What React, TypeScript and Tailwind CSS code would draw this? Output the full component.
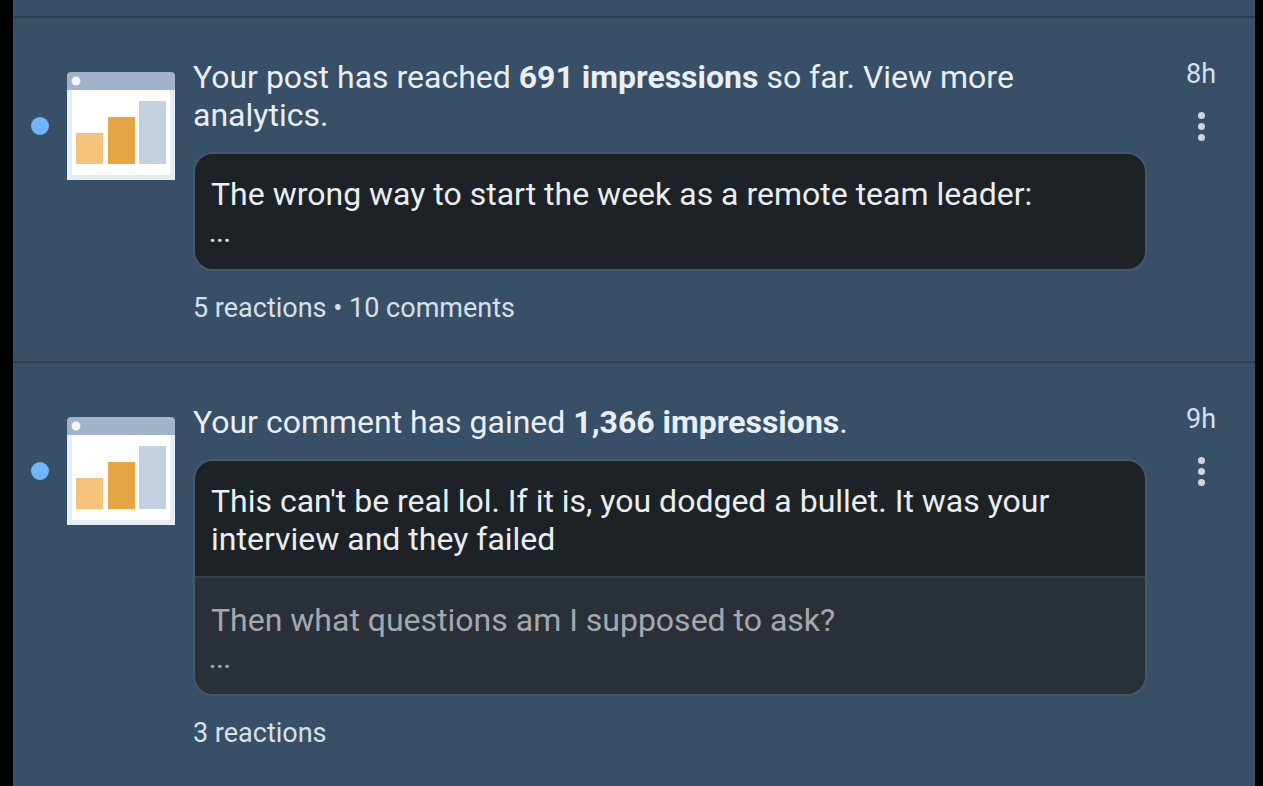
import React from "react";

function AnalyticsIcon() {
  return (
    <svg width="108" height="108" viewBox="0 0 108 108" className="block shrink-0">
      <path d="M0 18V4a4 4 0 0 1 4-4h100a4 4 0 0 1 4 4v14z" fill="#a0b3ca" />
      <rect x="0" y="18" width="108" height="90" fill="#e6edf4" />
      <rect x="5" y="18" width="98" height="85" fill="#ffffff" />
      <circle cx="9" cy="9" r="4.5" fill="#f3f6fa" />
      <rect x="9" y="61" width="27" height="31" fill="#f5c27c" />
      <rect x="41" y="45" width="27" height="47" fill="#e6a443" />
      <rect x="72" y="29" width="27" height="63" fill="#c3d1e0" />
    </svg>
  );
}

function Notification({
  time,
  children,
  stats,
  box,
}: {
  time: string;
  children: React.ReactNode;
  stats: string;
  box: React.ReactNode;
}) {
  return (
    <div className="flex pt-[40px] pl-[18px] border-b-2 border-[#2f3d4c] last:border-b-0">
      <div className="flex h-[108px] mt-[14px] items-center">
        <span className="w-[18px] h-[18px] rounded-full bg-[#70b5f9]" />
      </div>
      <div className="ml-[18px] mt-[14px] shrink-0">
        <AnalyticsIcon />
      </div>
      <div className="ml-[18px] w-[954px] shrink-0">
        <p className="text-[32px] leading-[38px] text-[#e9eef3]">{children}</p>
        <div className="mt-[18px] rounded-[20px] overflow-hidden border-2 border-[#46576a]">{box}</div>
        <p className="mt-[18px] mb-[34px] text-[27px] leading-[38px] text-[#d5e0ea]">{stats}</p>
      </div>
      <div className="flex-1 flex flex-col items-center pr-[6px]">
        <span className="text-[27px] leading-[30px] mt-[1px] text-[#d5e0ea] ml-[6px]">{time}</span>
        <div className="flex flex-col gap-[4px] mt-[23px] ml-[6px]">
          <span className="w-[7px] h-[7px] rounded-full bg-[#ccd6e0]" />
          <span className="w-[7px] h-[7px] rounded-full bg-[#ccd6e0]" />
          <span className="w-[7px] h-[7px] rounded-full bg-[#ccd6e0]" />
        </div>
      </div>
    </div>
  );
}

export default function App() {
  return (
    <div className="w-[1263px] h-[786px] bg-black overflow-hidden pl-[13px] pr-[8px]" style={{ fontFamily: "Roboto, sans-serif" }}>
      <div className="h-full bg-[#384f68]">
        <div className="h-[18px] border-b-2 border-[#2f3d4c]" />

        <Notification
          time="8h"
          stats="5 reactions • 10 comments"
          box={
            <div className="bg-[#1d2226] px-[16px] pt-[21px] pb-[16px] text-[32px] leading-[38px] text-[#e9eef3]">
              <p>The wrong way to start the week as a remote team leader:</p>
              <p className="text-[#d5d9dc] text-[26px] leading-[40px] font-medium -ml-[2px]">...</p>
            </div>
          }
        >
          Your post has reached <strong className="font-bold">691 impressions</strong> so far. View more analytics.
        </Notification>

        <Notification
          time="9h"
          stats="3 reactions"
          box={
            <>
              <div className="bg-[#1d2226] px-[16px] pt-[21px] pb-[18px] text-[32px] leading-[38px] text-[#e9eef3] border-b-2 border-[#3a4045]">
                This can't be real lol. If it is, you dodged a bullet. It was your interview and they failed
              </div>
              <div className="bg-[#293037] px-[16px] pt-[23px] pb-[15px] text-[32px] leading-[38px] text-[#a5a9ad]">
                <p>Then what questions am I supposed to ask?</p>
                <p className="text-[26px] leading-[40px] font-medium -ml-[2px]">...</p>
              </div>
            </>
          }
        >
          Your comment has gained <strong className="font-bold">1,366 impressions</strong>.
        </Notification>
      </div>
    </div>
  );
}
